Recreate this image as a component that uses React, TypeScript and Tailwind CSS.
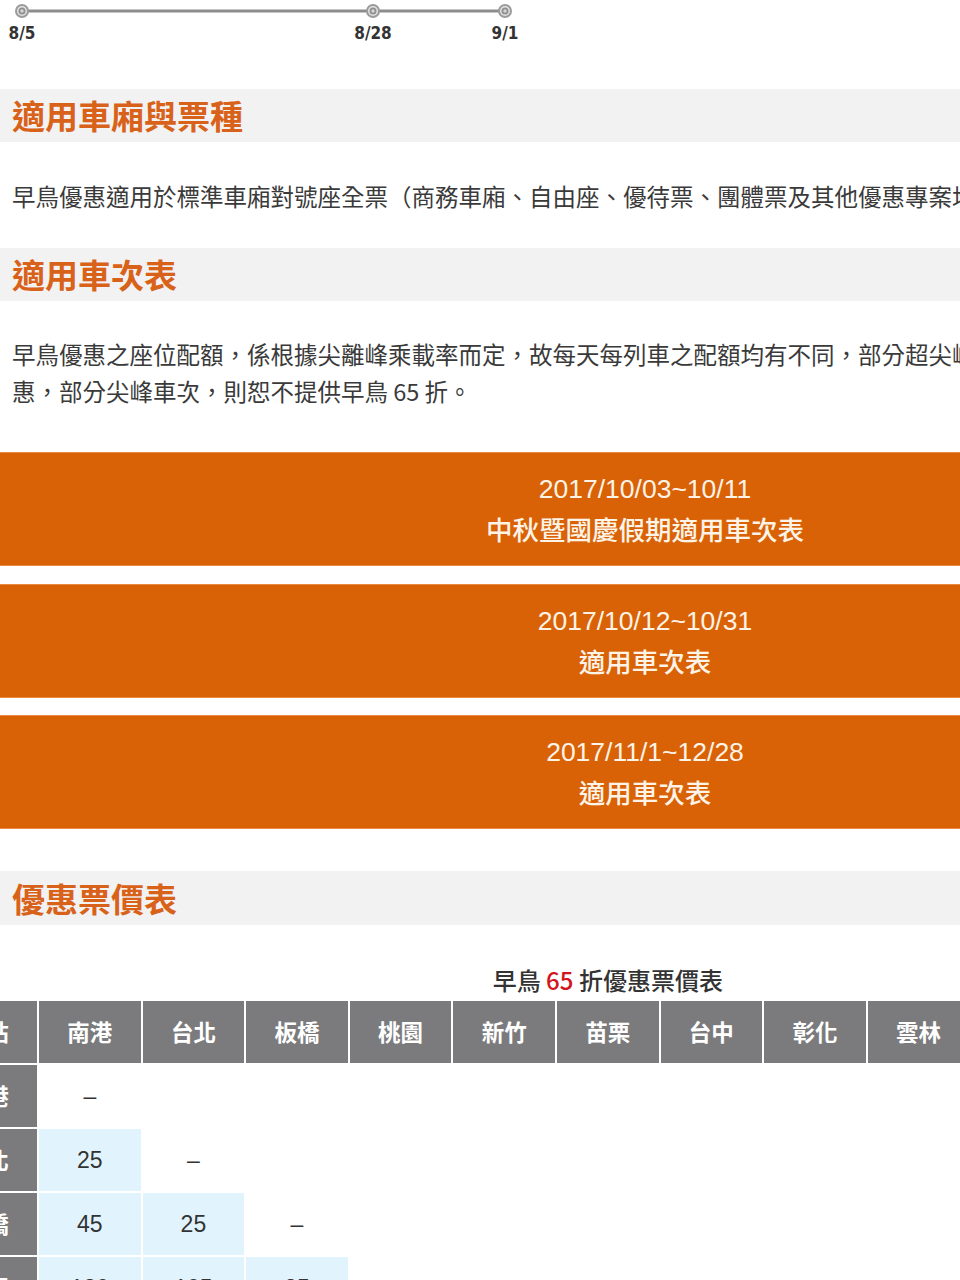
import React from "react";

const CJK = { fontFamily: '"Noto Sans CJK TC", "Noto Sans", sans-serif' };
const LATIN_CJK = { fontFamily: '"Liberation Sans", "Noto Sans CJK TC", sans-serif' };
const NARROW = {
  fontFamily: '"Liberation Sans Narrow", "DejaVu Sans Condensed", "Liberation Sans", sans-serif',
};

const STATIONS = ["南港", "台北", "板橋", "桃園", "新竹", "苗栗", "台中", "彰化", "雲林", "嘉義", "台南", "左營"];

// early bird 65% fares, lower triangle only (row = destination)
const FARES: number[][] = [
  [],
  [25],
  [45, 25],
  [130, 105, 85],
  [210, 185, 165, 85],
];

const TIMELINE = [
  { x: 22, label: "8/5" },
  { x: 373, label: "8/28" },
  { x: 505, label: "9/1" },
];

function Timeline() {
  return (
    <div className="relative h-[89px]">
      <svg width="960" height="22" className="block">
        <line x1="22" y1="11" x2="505" y2="11" stroke="#8d8d8d" strokeWidth="3" />
        {TIMELINE.map((t) => (
          <g key={t.label}>
            <circle cx={t.x} cy="11" r="7" fill="#9b9b9b" />
            <circle cx={t.x} cy="11" r="5" fill="#e2e2e2" />
            <circle cx={t.x} cy="11" r="3.5" fill="#8f8f8f" />
            <circle cx={t.x} cy="11" r="1.7" fill="#d4d4d4" />
          </g>
        ))}
      </svg>
      {TIMELINE.map((t) => (
        <span
          key={t.label}
          style={{ ...NARROW, left: t.x }}
          className="absolute top-[23px] -translate-x-1/2 text-[17px] leading-[20px] font-bold text-[#333]"
        >
          {t.label}
        </span>
      ))}
    </div>
  );
}

function SectionTitle({ children, tall }: { children: React.ReactNode; tall?: boolean }) {
  return (
    <div className={`flex items-center bg-[#f2f2f2] pl-3 ${tall ? "h-[54px]" : "h-[53px]"}`}>
      <h2 style={CJK} className="text-[33px] leading-none font-bold text-[#d9621a]">
        {children}
      </h2>
    </div>
  );
}

function ScheduleButton({ date, label }: { date: string; label: string }) {
  return (
    <div className="flex h-[114px] w-[1290px] flex-col items-center justify-center border-y border-[#ea8a45] bg-[#d96206] text-[#fdf3e7]">
      <span style={LATIN_CJK} className="text-[26.5px] leading-[40px]">{date}</span>
      <span style={CJK} className="text-[26.5px] leading-[40px] font-medium">{label}</span>
    </div>
  );
}

function PriceTable() {
  return (
    <div className="ml-[-64.6px] w-[1344.8px]">
      <p style={CJK} className="mb-[6px] text-center text-[24px] leading-[30px] font-medium text-[#333]">
        早鳥 <span className="text-[#d3141c]">65</span> 折優惠票價表
      </p>
      <div className="grid grid-cols-[repeat(13,101.6px)] gap-[2px] bg-white">
        <div style={CJK} className="flex h-[62px] items-center justify-center bg-[#7b7b7d] text-[22.5px] font-bold text-white">
          車站
        </div>
        {STATIONS.map((s) => (
          <div key={s} style={CJK} className="flex h-[62px] items-center justify-center bg-[#7b7b7d] text-[22.5px] font-bold text-white">
            {s}
          </div>
        ))}
        {FARES.map((row, i) => (
          <React.Fragment key={STATIONS[i]}>
            <div style={CJK} className="flex h-[62px] items-center justify-center bg-[#7b7b7d] text-[22.5px] font-bold text-white">
              {STATIONS[i]}
            </div>
            {STATIONS.map((s, j) => {
              if (j < i) {
                return (
                  <div key={s} className="flex h-[62px] items-center justify-center bg-[#e1f3fd] text-[23px] text-[#333] [font-family:'Liberation_Sans',sans-serif]">
                    {row[j]}
                  </div>
                );
              }
              return (
                <div key={s} className="flex h-[62px] items-center justify-center bg-white text-[23px] text-[#333] [font-family:'Liberation_Sans',sans-serif]">
                  {j === i ? "–" : ""}
                </div>
              );
            })}
          </React.Fragment>
        ))}
      </div>
    </div>
  );
}

export default function App() {
  return (
    <div className="w-full overflow-hidden bg-white">
      <div className="w-[960px]">
        <Timeline />

        <SectionTitle>適用車廂與票種</SectionTitle>
        <p style={CJK} className="whitespace-nowrap pt-[36px] pb-[33px] pl-3 text-[23.5px] leading-[37px] text-[#3a3a3a]">
          早鳥優惠適用於標準車廂對號座全票（商務車廂、自由座、優待票、團體票及其他優惠專案均不適用）。
        </p>

        <SectionTitle>適用車次表</SectionTitle>
        <div style={CJK} className="whitespace-nowrap pt-[34.5px] pl-3 text-[23.5px] leading-[37px] text-[#3a3a3a]">
          <p>早鳥優惠之座位配額，係根據尖離峰乘載率而定，故每天每列車之配額均有不同，部分超尖峰車次不提供早鳥優</p>
          <p>惠，部分尖峰車次，則恕不提供早鳥 65 折。</p>
        </div>

        <div className="mt-[42.5px] flex flex-col gap-[17.5px]">
          <ScheduleButton date="2017/10/03~10/11" label="中秋暨國慶假期適用車次表" />
          <ScheduleButton date="2017/10/12~10/31" label="適用車次表" />
          <ScheduleButton date="2017/11/1~12/28" label="適用車次表" />
        </div>

        <div className="mt-[42px]">
          <SectionTitle tall>優惠票價表</SectionTitle>
        </div>

        <div className="pt-[40px]">
          <PriceTable />
        </div>
      </div>
    </div>
  );
}
